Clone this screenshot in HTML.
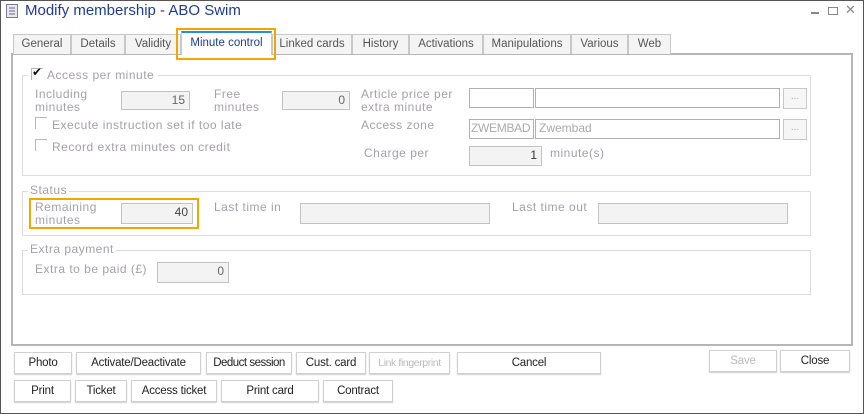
<!DOCTYPE html><html><head><style>
*{box-sizing:border-box;margin:0;padding:0}
body{width:864px;height:414px;background:#fff;font-family:"Liberation Sans",sans-serif;font-size:12px;position:relative;overflow:hidden}
.a{position:absolute;white-space:nowrap}
.l{color:#a4a0a8;letter-spacing:.5px;line-height:13px}
.in{position:absolute;border:1px solid #c2c2c2;background:#f3f3f3;text-align:right;padding-right:4px;color:#666;line-height:17px;font-size:12px}
.w{background:#fff;border-color:#b0b0b0}
.tab{position:absolute;top:34px;height:20px;border:1px solid #c8c8c8;border-bottom:none;background:#f4f4f4;color:#555;text-align:center;line-height:18px;font-size:11.5px}
.grp{position:absolute;border:1px solid #dcdcdc}
.btn{position:absolute;height:22px;border:1px solid #d0d0d0;background:#fff;color:#222;text-align:center;line-height:20px;font-size:11.5px;box-shadow:0 1px 1px #ccc;letter-spacing:-.2px}
.cb{position:absolute;width:12px;height:12px;border-left:1px solid #b8b8b8;border-top:1px solid #b8b8b8}
.dot{position:absolute;width:24px;height:21px;border:1px solid #c8c8c8;background:#f6f6f6;color:#aaa;text-align:center;line-height:16px;font-size:10px}
</style></head><body>
<div class="a" style="left:0;top:0;width:864px;height:414px;border:1px solid #555"></div>
<svg class="a" style="left:6px;top:4px" width="12" height="14"><rect x=".5" y=".5" width="11" height="13" fill="#e8e8f0" stroke="#7a7a9a"/><path d="M3 4h6M3 7h6M3 10h6" stroke="#6a6a8a"/></svg>
<div class="a" style="left:25px;top:2px;font-size:15px;color:#1e3d8f">Modify membership - ABO Swim</div>
<div class="a" style="left:811px;top:12px;width:8px;height:2px;background:#888"></div>
<div class="a" style="left:828px;top:7px;width:10px;height:8px;border:1px solid #888"></div>
<div class="a" style="left:845px;top:2px;color:#888;font-size:13px">✕</div>

<div class="a" style="left:11px;top:53px;width:842px;height:293px;border:2px solid #b6b6b6"></div>
<div class="tab" style="left:13px;width:58px">General</div>
<div class="tab" style="left:71px;width:54px">Details</div>
<div class="tab" style="left:125px;width:56px">Validity</div>
<div class="tab" style="left:181px;top:31px;height:24px;width:91px;background:#fff;border-top:2px solid #2a8fd8;color:#1e3d8f;line-height:20px">Minute control</div>
<div class="tab" style="left:272px;width:80px">Linked cards</div>
<div class="tab" style="left:352px;width:57px">History</div>
<div class="tab" style="left:409px;width:74px">Activations</div>
<div class="tab" style="left:483px;width:88px">Manipulations</div>
<div class="tab" style="left:571px;width:57px">Various</div>
<div class="tab" style="left:628px;width:43px">Web</div>
<div class="a" style="left:176px;top:28px;width:100px;height:32px;border:2px solid #f0a800"></div>

<div class="grp" style="left:22px;top:75px;width:789px;height:101px"></div>
<div class="a" style="left:28px;top:68px;width:130px;height:14px;background:#fff"></div>
<div class="cb" style="left:31px;top:68px"></div><div class="a" style="left:32px;top:65px;font-size:12px;color:#111">✔</div>
<div class="a l" style="left:47px;top:69px">Access per minute</div>
<div class="a l" style="left:35px;top:88px">Including<br>minutes</div>
<div class="in" style="left:121px;top:91px;width:69px;height:19px">15</div>
<div class="a l" style="left:214px;top:88px">Free<br>minutes</div>
<div class="in" style="left:282px;top:91px;width:68px;height:19px">0</div>
<div class="a l" style="left:361px;top:88px">Article price per<br>extra minute</div>
<div class="in w" style="left:469px;top:88px;width:65px;height:20px"></div>
<div class="in w" style="left:535px;top:88px;width:245px;height:20px"></div>
<div class="dot" style="left:783px;top:88px">...</div>
<div class="cb" style="left:35px;top:117px"></div>
<div class="a l" style="left:52px;top:119px">Execute instruction set if too late</div>
<div class="cb" style="left:35px;top:139px"></div>
<div class="a l" style="left:52px;top:141px">Record extra minutes on credit</div>
<div class="a l" style="left:361px;top:119px">Access zone</div>
<div class="in w" style="left:469px;top:119px;width:65px;height:20px;text-align:left;padding-left:1px;color:#aaa;letter-spacing:-.3px">ZWEMBAD</div>
<div class="in w" style="left:535px;top:119px;width:245px;height:20px;text-align:left;padding-left:3px;color:#aaa">Zwembad</div>
<div class="dot" style="left:783px;top:119px">...</div>
<div class="a l" style="left:364px;top:147px">Charge per</div>
<div class="in" style="left:469px;top:146px;width:73px;height:20px;color:#333">1</div>
<div class="a l" style="left:550px;top:147px">minute(s)</div>

<div class="grp" style="left:22px;top:191px;width:789px;height:45px"></div>
<div class="a l" style="left:28px;top:184px;background:#fff;padding:0 2px">Status</div>
<div class="a l" style="left:35px;top:201px">Remaining<br>minutes</div>
<div class="in" style="left:121px;top:203px;width:72px;height:21px;color:#444">40</div>
<div class="a" style="left:29px;top:198px;width:170px;height:31px;border:2px solid #f0a800"></div>
<div class="a l" style="left:214px;top:201px">Last time in</div>
<div class="in" style="left:300px;top:203px;width:190px;height:21px"></div>
<div class="a l" style="left:512px;top:201px">Last time out</div>
<div class="in" style="left:598px;top:203px;width:190px;height:21px"></div>

<div class="grp" style="left:22px;top:250px;width:789px;height:45px"></div>
<div class="a l" style="left:28px;top:243px;background:#fff;padding:0 2px">Extra payment</div>
<div class="a l" style="left:35px;top:263px">Extra to be paid (£)</div>
<div class="in" style="left:157px;top:262px;width:72px;height:21px">0</div>

<div class="btn" style="left:14px;top:352px;width:58px">Photo</div>
<div class="btn" style="left:76px;top:352px;width:125px">Activate/Deactivate</div>
<div class="btn" style="left:206px;top:352px;width:86px;letter-spacing:-.5px">Deduct session</div>
<div class="btn" style="left:296px;top:352px;width:70px">Cust. card</div>
<div class="btn" style="left:369px;top:352px;width:81px;color:#bbb;font-size:10.5px;letter-spacing:-.4px">Link fingerprint</div>
<div class="btn" style="left:457px;top:352px;width:144px">Cancel</div>
<div class="btn" style="left:709px;top:350px;width:68px;color:#bbb">Save</div>
<div class="btn" style="left:780px;top:350px;width:70px">Close</div>
<div class="btn" style="left:14px;top:380px;width:57px">Print</div>
<div class="btn" style="left:75px;top:380px;width:52px">Ticket</div>
<div class="btn" style="left:131px;top:380px;width:86px">Access ticket</div>
<div class="btn" style="left:221px;top:380px;width:98px">Print card</div>
<div class="btn" style="left:323px;top:380px;width:70px">Contract</div>
</body></html>
